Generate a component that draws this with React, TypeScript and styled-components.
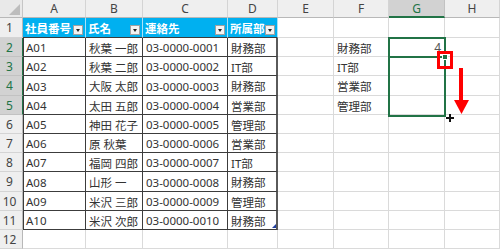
import React from "react";
import styled, { createGlobalStyle, css } from "styled-components";

const GlobalStyle = createGlobalStyle`
  html, body { margin: 0; padding: 0; background: #ffffff; }
  body { font-family: "Noto Sans", "Noto Sans CJK JP", sans-serif; }
`;

const GREEN = "#217346";
const TABLE_LINE = "#3c3c3c";
const GRID_LINE = "#dadada";

const Sheet = styled.div`
  position: relative;
  width: 500px;
  height: 249px;
  overflow: hidden;
  display: grid;
  grid-template-columns: 23px 63px 57px 85px 50px 56px 55px 56px 55px;
  grid-template-rows: 18px 20px 19px 19px 20px 19px 19px 19px 19px 20px 19px 19px 19px;
  font-size: 11.5px;
  color: #333;
`;

const Corner = styled.div`
  position: relative;
  background: #e9e9e9;
  border-right: 1px solid #c6c6c6;
  border-bottom: 1px solid #b8b8b8;
  box-sizing: border-box;
  &::after {
    content: "";
    position: absolute;
    right: 2px;
    bottom: 2px;
    width: 0;
    height: 0;
    border-left: 11px solid transparent;
    border-bottom: 11px solid #bdbdbd;
  }
`;

const ColHeader = styled.div<{ $active?: boolean }>`
  display: flex;
  align-items: center;
  justify-content: center;
  box-sizing: border-box;
  font-size: 12px;
  color: #444;
  background: #efefef;
  border-right: 1px solid #d4d4d4;
  border-bottom: 1px solid #b8b8b8;
  ${(p) =>
    p.$active &&
    css`
      background: #d2d2d2;
      color: ${GREEN};
      border-bottom: 2px solid ${GREEN};
      border-right-color: #c2c2c2;
    `}
`;

const RowHeader = styled.div<{ $active?: boolean }>`
  display: flex;
  align-items: center;
  justify-content: center;
  padding-right: 3px;
  box-sizing: border-box;
  font-size: 12px;
  color: #444;
  background: #efefef;
  border-right: 1px solid #b8b8b8;
  border-bottom: 1px solid #d4d4d4;
  ${(p) =>
    p.$active &&
    css`
      background: #d2d2d2;
      color: ${GREEN};
      border-right: 1px solid ${GREEN};
      border-bottom-color: #c2c2c2;
    `}
`;

type CellKind = "head" | "table" | "plain";

const Cell = styled.div<{
  $kind?: CellKind;
  $right?: boolean;
  $first?: boolean;
  $thick?: boolean;
}>`
  position: relative;
  display: flex;
  align-items: center;
  justify-content: ${(p) => (p.$right ? "flex-end" : "flex-start")};
  padding: 1px 3px 0 3px;
  box-sizing: border-box;
  white-space: nowrap;
  overflow: visible;
  background: #ffffff;
  border-right: 1px solid ${GRID_LINE};
  border-bottom: 1px solid ${GRID_LINE};
  ${(p) =>
    p.$kind === "table" &&
    css`
      border-right-color: ${TABLE_LINE};
      border-bottom-color: ${TABLE_LINE};
    `}
  ${(p) =>
    p.$kind === "head" &&
    css`
      background: #00b0f0;
      color: #ffffff;
      font-weight: 700;
      padding: 1px 2px 0 2px;
      border-right-color: #a9e2f8;
      border-bottom-color: ${TABLE_LINE};
    `}
  ${(p) =>
    p.$first &&
    css`
      box-shadow: inset 1px 0 0 ${TABLE_LINE};
    `}
  ${(p) =>
    p.$thick &&
    css`
      border-right: 2px solid #5a5a5a;
    `}
`;

const HeadLabel = styled.span`
  flex: 1 1 auto;
  min-width: 0;
  overflow: hidden;
`;

const FilterButton = styled.span`
  flex: 0 0 10px;
  align-self: flex-end;
  margin-bottom: 2px;
  width: 10px;
  height: 10px;
  box-sizing: border-box;
  background: #f3f3f3;
  border: 1px solid #a0a0a0;
  display: flex;
  align-items: center;
  justify-content: center;
  &::after {
    content: "";
    width: 0;
    height: 0;
    border-left: 2.5px solid transparent;
    border-right: 2.5px solid transparent;
    border-top: 3px solid #222;
  }
`;

const ResizeHandle = styled.span`
  position: absolute;
  right: 0;
  bottom: 1px;
  width: 0;
  height: 0;
  border-left: 4px solid transparent;
  border-bottom: 4px solid #1f3ea0;
`;

const DragValue = styled.span`
  color: #555;
  font-size: 12px;
`;

const Selection = styled.div`
  position: absolute;
  left: 388px;
  top: 37px;
  width: 58px;
  height: 80px;
  box-sizing: border-box;
  border: 2px solid ${GREEN};
  pointer-events: none;
`;

const InnerLine = styled.div`
  position: absolute;
  left: 388px;
  top: 56px;
  width: 58px;
  height: 2px;
  background: ${GREEN};
`;

const FillHandle = styled.div`
  position: absolute;
  left: 442px;
  top: 54px;
  width: 6px;
  height: 6px;
  box-sizing: border-box;
  background: ${GREEN};
  border: 1px solid #ffffff;
`;

const RedBox = styled.div`
  position: absolute;
  left: 437px;
  top: 51px;
  width: 16px;
  height: 18px;
  box-sizing: border-box;
  border: 3px solid #ff0000;
`;

const Arrow = styled.svg`
  position: absolute;
  left: 453px;
  top: 67px;
`;

const Cursor = styled.svg`
  position: absolute;
  left: 446px;
  top: 114px;
`;

const columns = ["A", "B", "C", "D", "E", "F", "G", "H"];
const headers = ["社員番号", "氏名", "連絡先", "所属部"];

const rows: [string, string, string, string][] = [
  ["A01", "秋葉 一郎", "03-0000-0001", "財務部"],
  ["A02", "秋葉 二郎", "03-0000-0002", "IT部"],
  ["A03", "大阪 太郎", "03-0000-0003", "財務部"],
  ["A04", "太田 五郎", "03-0000-0004", "営業部"],
  ["A05", "神田 花子", "03-0000-0005", "管理部"],
  ["A06", "原 秋葉", "03-0000-0006", "営業部"],
  ["A07", "福岡 四郎", "03-0000-0007", "IT部"],
  ["A08", "山形 一", "03-0000-0008", "財務部"],
  ["A09", "米沢 三郎", "03-0000-0009", "管理部"],
  ["A10", "米沢 次郎", "03-0000-0010", "財務部"],
];

const sideList = ["財務部", "IT部", "営業部", "管理部"];

export default function App() {
  return (
    <>
      <GlobalStyle />
      <Sheet>
        <Corner />
        {columns.map((c) => (
          <ColHeader key={c} $active={c === "G"}>
            {c}
          </ColHeader>
        ))}

        {/* Row 1 */}
        <RowHeader>1</RowHeader>
        {headers.map((h) => (
          <Cell key={h} $kind="head">
            <HeadLabel>{h}</HeadLabel>
            <FilterButton />
          </Cell>
        ))}
        <Cell />
        <Cell />
        <Cell />
        <Cell />

        {rows.map((r, i) => {
          const rowNo = i + 2;
          const side = sideList[i];
          return (
            <React.Fragment key={r[0]}>
              <RowHeader $active={rowNo >= 2 && rowNo <= 5}>{rowNo}</RowHeader>
              <Cell $kind="table" $first>
                {r[0]}
              </Cell>
              <Cell $kind="table">{r[1]}</Cell>
              <Cell $kind="table">{r[2]}</Cell>
              <Cell $kind="table" $thick>
                {r[3]}
                {rowNo === 11 && <ResizeHandle />}
              </Cell>
              <Cell />
              <Cell>{side ?? ""}</Cell>
              <Cell $right>{rowNo === 2 ? <DragValue>4</DragValue> : ""}</Cell>
              <Cell />
            </React.Fragment>
          );
        })}

        <RowHeader>12</RowHeader>
        {columns.map((c) => (
          <Cell key={"r12" + c} />
        ))}

        <Selection />
        <InnerLine />
        <FillHandle />
        <RedBox />
        <Arrow width="17" height="49" viewBox="0 0 17 49">
          <rect x="6" y="1" width="4" height="33" fill="#ff0000" />
          <polygon points="1,33 16,33 8.5,47" fill="#ff0000" />
        </Arrow>
        <Cursor width="8" height="8" viewBox="0 0 8 8">
          <rect x="3" y="0" width="2" height="8" fill="#111" />
          <rect x="0" y="3" width="8" height="2" fill="#111" />
        </Cursor>
      </Sheet>
    </>
  );
}
